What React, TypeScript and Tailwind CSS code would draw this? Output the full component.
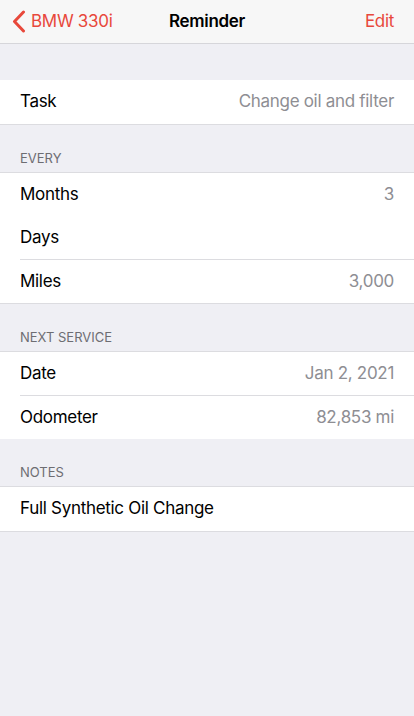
const rows = {
  every: [
    { label: "Months", value: "3", line: false },
    { label: "Days", value: "", line: true },
    { label: "Miles", value: "3,000", line: false },
  ],
  next: [
    { label: "Date", value: "Jan 2, 2021", line: true },
    { label: "Odometer", value: "82,853 mi", line: false },
  ],
};

function Row({ label, value, line }: { label: string; value: string; line?: boolean }) {
  return (
    <div className="pl-5 bg-white">
      <div
        className={
          "h-[43.5px] flex items-center justify-between pr-5 " +
          (line ? "border-b border-[#dcdce0]" : "")
        }
      >
        <span className="text-[17px] text-black">{label}</span>
        <span className="text-[17px] text-[#8e8e93]">{value}</span>
      </div>
    </div>
  );
}

function Header({ title }: { title: string }) {
  return (
    <div className="h-[48px] flex items-end px-5 pb-[6px] border-b border-[#dcdce0]">
      <span className="text-[13px] leading-[16px] text-[#6d6d72] tracking-[0px]">{title}</span>
    </div>
  );
}

export default function App() {
  return (
    <div
      className="w-[414px] h-[716px] bg-[#efeff4] tracking-[-0.3px]"
      style={{ fontFamily: "Inter, 'Noto Sans', sans-serif" }}
    >
      {/* Nav bar */}
      <div className="h-[44px] bg-[#f7f7f7] border-b border-[#d6d6da] relative flex items-center justify-between px-3">
        <div className="flex items-center gap-[5px] text-[#e8483b]">
          <svg width="14" height="23" viewBox="0 0 14 23" fill="none">
            <path d="M11.5 2L2.5 11.5L11.5 21" stroke="#e8483b" strokeWidth="3" strokeLinecap="round" strokeLinejoin="round" />
          </svg>
          <span className="text-[17px]">BMW 330i</span>
        </div>
        <span className="absolute left-1/2 -translate-x-1/2 text-[17px] font-semibold text-black">Reminder</span>
        <span className="text-[17px] text-[#e8483b] pr-2">Edit</span>
      </div>

      <div className="h-[36px]" />
      <div className="border-b border-[#dcdce0]">
        <Row label="Task" value="Change oil and filter" />
      </div>

      <Header title="EVERY" />
      <div className="border-b border-[#dcdce0]">
        {rows.every.map((r) => (
          <Row key={r.label} {...r} />
        ))}
      </div>

      <Header title="NEXT SERVICE" />
      <div>
        {rows.next.map((r) => (
          <Row key={r.label} {...r} />
        ))}
      </div>

      <Header title="NOTES" />
      <div className="border-b border-[#dcdce0]">
        <Row label="Full Synthetic Oil Change" value="" />
      </div>
    </div>
  );
}
